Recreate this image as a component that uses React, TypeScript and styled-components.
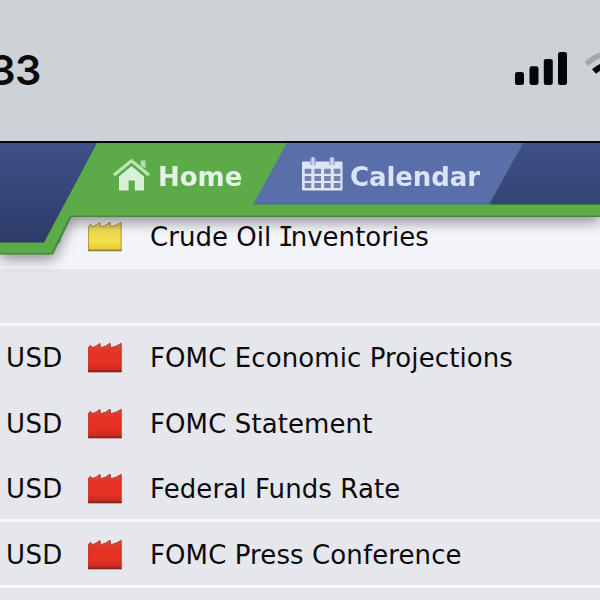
import React from "react";
import styled, { createGlobalStyle } from "styled-components";

const GlobalStyle = createGlobalStyle`
  * { box-sizing: border-box; }
  body { margin: 0; background: #e6e7ec; overflow: hidden; }
`;

const Screen = styled.main`
  position: relative;
  width: 600px;
  height: 600px;
  overflow: hidden;
  background: #e6e7ec;
  color: #0b0b0d;
  font-family: "DejaVu Sans", Verdana, sans-serif;
`;

const StatusBar = styled.header`
  display: flex;
  justify-content: space-between;
  height: 143px;
  padding-top: 44px;
  background: #cdd2d7;
  border-bottom: 2px solid #07080d;
`;

const Clock = styled.div`
  display: flex;
  justify-content: flex-end;
  width: 40.5px;
  height: 52px;
  font: 560 41.5px/52px Inter, sans-serif;
  letter-spacing: -0.8px;
`;

const StatusIcons = styled.div`
  display: flex;
  width: 85px;
  height: 52px;
`;

const NavOverlay = styled.nav`
  position: absolute;
  top: 143px;
  left: 0;
  width: 600px;
  height: 112px;
  clip-path: inset(0 0 -40px 0);
  filter: drop-shadow(0 5px 7px rgba(35, 40, 35, 0.5));
`;

const NavFrame = styled.div`
  height: 112px;
  background: #45893b;
  clip-path: polygon(0 0, 100% 0, 100% 74px, 71.5px 74px, 53px 111.5px, 0 111.5px);
`;

const NavGreen = styled.div`
  display: grid;
  grid-template-columns: 97px 1fr;
  height: 112px;
  background: #5bac49;
  clip-path: polygon(0 0, 100% 0, 100% 72.5px, 70px 72.5px, 51.5px 110px, 0 110px);
`;

const NavCorner = styled.div`
  height: 99.5px;
  background: linear-gradient(#3e5288, #2c3a68);
  clip-path: polygon(0 0, 100% 0, 44px 100%, 0 100%);
`;

const TabStrip = styled.div`
  display: flex;
  height: 61.5px;
`;

const Tab = styled.a<{ $width: number; $active?: boolean }>`
  display: flex;
  align-items: flex-start;
  flex: none;
  width: ${(p) => p.$width}px;
  height: 61.5px;
  padding: ${(p) => (p.$active ? "14px 0 0 15px" : "14px 0 0 48px")};
  color: ${(p) => (p.$active ? "#e4f2e8" : "#d9e4f8")};
  background: ${(p) => (p.$active ? "transparent" : "linear-gradient(#5a6fa9 58px, #526d9c 61px)")};
  clip-path: ${(p) => (p.$active ? "none" : "polygon(34px 0, 100% 0, calc(100% - 34px) 100%, 0 100%)")};
`;

const TabLabel = styled.span<{ $gap: number; $spacing: number }>`
  margin-left: ${(p) => p.$gap}px;
  font-size: 26px;
  font-weight: 700;
  line-height: 41px;
  letter-spacing: ${(p) => p.$spacing}px;
`;

const NavRest = styled.div`
  flex: none;
  width: 111px;
  height: 61.5px;
  margin-left: -34px;
  background: linear-gradient(#3e5289, #344575 58px, #2e4c64 61px);
  clip-path: polygon(34px 0, 100% 0, 100% 100%, 0 100%);
`;

const EventList = styled.section`
  display: flex;
  flex-direction: column;
`;

const EventRow = styled.article<{ $h: number; $light?: boolean; $line?: boolean }>`
  display: grid;
  grid-template-columns: 81px 63px 1fr;
  align-items: end;
  flex: none;
  height: ${(p) => p.$h}px;
  padding: 0 0 ${(p) => (p.$light ? 16 : p.$line ? 13.8 : 16.8)}px 6px;
  background: ${(p) => (p.$light ? "#f4f5fa" : "#e6e7ec")};
  border-bottom: ${(p) => (p.$line ? "3px solid #f7f8fb" : "0")};
  font-size: 26px;
  line-height: 32px;
  white-space: nowrap;
`;

const EventName = styled.span<{ $spacing: number }>`
  letter-spacing: ${(p) => p.$spacing}px;
`;

const SerifCap = styled.span`
  margin: 0 -3px 0 -1.6px;
  font-family: "DejaVu Sans Mono", monospace;
`;

const Currency = styled.span`
  letter-spacing: 0.4px;
`;

const Impact = styled.svg`
  display: block;
  width: 36px;
  height: 32px;
`;

const Factory = ({ high = true }: { high?: boolean }) => {
  const id = high ? "high" : "medium";
  return (
    <Impact viewBox="0 0 36 32">
      <defs>
        <linearGradient id={id} x1="0" y1="0" x2="0" y2="1">
          <stop offset="0" stopColor={high ? "#c5524c" : "#cdb257"} />
          <stop offset=".28" stopColor={high ? "#e83222" : "#f1dc50"} />
          <stop offset=".72" stopColor={high ? "#e43123" : "#f1de49"} />
          <stop offset="1" stopColor={high ? "#bd281d" : "#e0c536"} />
        </linearGradient>
      </defs>
      <path
        d="M1.6 29.6V5Q2.6 4 3.6 3.2L5 5.8Q9.4 4.6 12.8 1.4L13.8 5.8Q18.8 4.8 23 1.2L23.8 5.8Q29.4 4.6 34.2 1.4V29.6Z"
        fill={`url(#${id})`}
        stroke={high ? "#b9352c" : "#b2963c"}
        strokeWidth="1"
      />
      <path d="M1.1 29.4H34.7" stroke={high ? "#8b211c" : "#9a832d"} strokeWidth="1.8" />
    </Impact>
  );
};

const HomeIcon = () => (
  <svg width="38" height="36" viewBox="0 0 38 36">
    <path d="M28.8 3.5h4.7v8l-4.7-3z" fill="#b5dfac" />
    <path d="M7 19.5 19.5 9 32 19.5V33.5H22.8v-10h-6.2v10H7z" fill="#d8efd8" />
    <path d="M2 18 19.5 3.8 37 18" fill="none" stroke="#bfe4b9" strokeWidth="3.2" />
  </svg>
);

const CalendarIcon = () => (
  <svg width="42" height="36" viewBox="0 0 42 36">
    <rect x="1" y="4.5" width="40.5" height="29" rx="1" fill="#dfe4f2" />
    <g fill="#7483b2">
      {[11.7, 18.9, 26.1].map((y) =>
        [3.7, 13.4, 23.1, 32.8].map((x) => <rect key={`${x}-${y}`} x={x} y={y} width="6.6" height="5" rx=".5" />)
      )}
    </g>
    <path d="M12 1v7M31 1v7" stroke="#8698cf" strokeWidth="5.5" />
    <path d="M12 1.5V7M31 1.5V7" stroke="#c4d4fb" strokeWidth="3.2" strokeLinecap="round" />
  </svg>
);

const SignalIcons = () => (
  <svg width="85" height="52" viewBox="0 0 85 52">
    <g fill="#050609">
      <rect x="0" y="28" width="9" height="13" rx="2.3" />
      <rect x="14.5" y="22.3" width="9" height="18.7" rx="2.3" />
      <rect x="28.8" y="15" width="9" height="26" rx="2.3" />
      <rect x="43" y="8" width="9" height="33" rx="2.3" />
    </g>
    <path d="M71.5 20Q82 9.5 97 9.5" fill="none" stroke="#a5a9ad" strokeWidth="5.5" />
    <path d="M79 27.5Q86 21 97 20" fill="none" stroke="#050609" strokeWidth="6" />
  </svg>
);

const events: { name: React.ReactNode; height: number; light?: boolean; line?: boolean }[] = [
  {
    name: (
      <>
        Crude Oil <SerifCap>I</SerifCap>nventories
      </>
    ),
    height: 126,
    light: true,
  },
  { name: "", height: 57, line: true },
  { name: "FOMC Economic Projections", height: 65.2 },
  { name: "FOMC Statement", height: 65.5 },
  { name: "Federal Funds Rate", height: 65.5, line: true },
  { name: "FOMC Press Conference", height: 65.5, line: true },
];

export default function App() {
  return (
    <>
      <GlobalStyle />
      <Screen>
        <StatusBar>
          <Clock>33</Clock>
          <StatusIcons>
            <SignalIcons />
          </StatusIcons>
        </StatusBar>
        <EventList>
          {events.map((e, i) => (
            <EventRow key={i} $h={e.height} $light={e.light} $line={e.line}>
              {e.name && (
                <>
                  <Currency>USD</Currency>
                  <Factory high={!e.light} />
                  <EventName $spacing={e.light ? 0.03 : 0.1}>{e.name}</EventName>
                </>
              )}
            </EventRow>
          ))}
        </EventList>
        <NavOverlay>
          <NavFrame>
            <NavGreen>
              <NavCorner />
              <TabStrip>
                <Tab $width={156} $active>
                  <HomeIcon />
                  <TabLabel $gap={8} $spacing={0}>Home</TabLabel>
                </Tab>
                <Tab $width={270}>
                  <CalendarIcon />
                  <TabLabel $gap={7} $spacing={-0.1}>Calendar</TabLabel>
                </Tab>
                <NavRest />
              </TabStrip>
            </NavGreen>
          </NavFrame>
        </NavOverlay>
      </Screen>
    </>
  );
}
